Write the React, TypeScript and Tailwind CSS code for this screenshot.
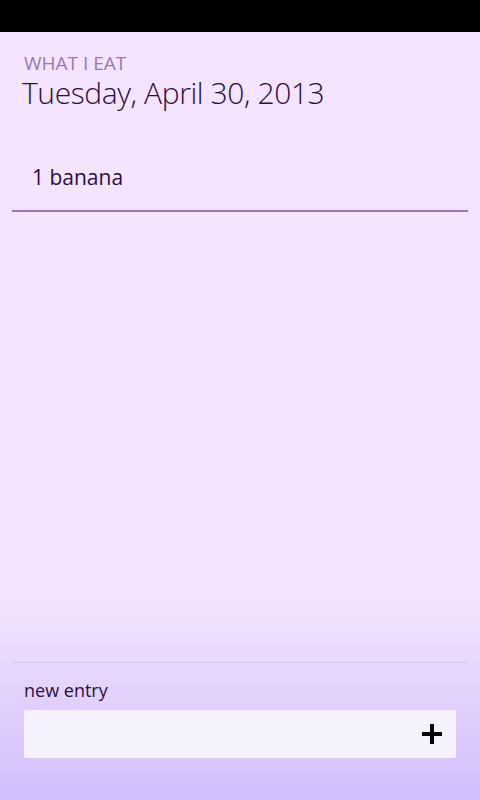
export default function App() {
  return (
    <div
      className="h-[800px] w-[480px] flex flex-col bg-[#f4e4fe] overflow-hidden"
      style={{ fontFamily: '"Open Sans", "Noto Sans", sans-serif' }}
    >
      <div className="h-8 bg-black shrink-0" />

      <div className="flex-1 flex flex-col">
        <header className="pl-6 pt-[20px]">
          <p className="text-[19px] leading-[22px] text-[#9a78b8]">WHAT I EAT</p>
          <h1 className="-ml-[2px] text-[30px] leading-[38px] font-light text-[#2a0f45] tracking-[-0.4px]">
            Tuesday, April 30, 2013
          </h1>
        </header>

        <ul className="mt-[51px] mx-3">
          <li className="pl-5 pb-[19px] text-[21px] leading-[28px] text-[#2a0f45] border-b-2 border-[#9b75b5]">
            1 banana
          </li>
        </ul>
      </div>

      <footer className="h-[200px] shrink-0 bg-gradient-to-b from-[#f4e4fe] to-[#d1befb] flex flex-col">
        <div className="h-[63px] mx-3 border-b border-[#d6c6f6]" />
        <label className="pl-6 mt-[15px] text-[18px] leading-[24px] text-[#2a0f45]">new entry</label>
        <div className="mx-6 mt-[8px] h-12 bg-[#f5f1fd] flex items-center justify-end pr-[14px]">
          <svg width="20" height="20" viewBox="0 0 20 20" aria-label="add">
            <rect x="8" y="0" width="4" height="20" fill="#000" />
            <rect x="0" y="8" width="20" height="4" fill="#000" />
          </svg>
        </div>
      </footer>
    </div>
  );
}
